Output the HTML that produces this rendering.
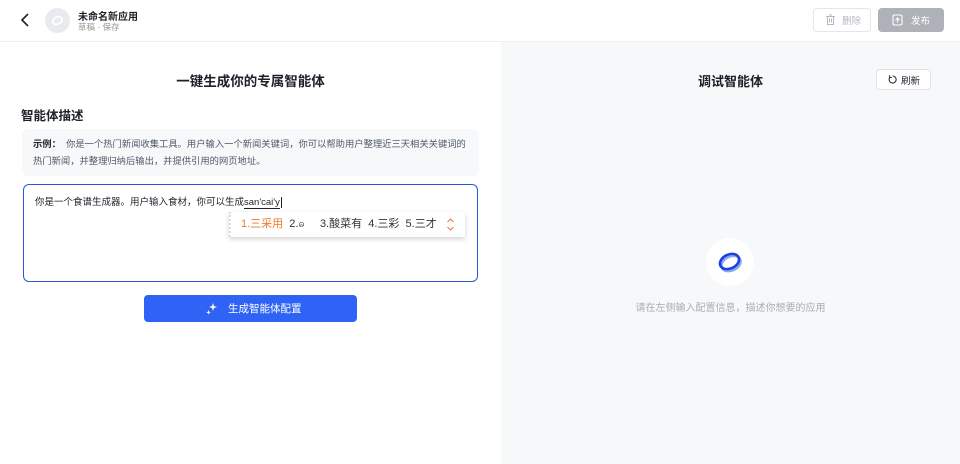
<!DOCTYPE html>
<html><head><meta charset="utf-8"><style>
*{box-sizing:border-box;margin:0;padding:0}
body{width:960px;height:464px;overflow:hidden;font-family:"Liberation Sans","Noto Sans CJK SC",sans-serif;background:#fff;position:relative;color:#1d2129}
.hdr{position:absolute;left:0;top:0;width:960px;height:42px;border-bottom:1px solid #eceef2;background:#fff}
.right{position:absolute;left:501px;top:42px;width:459px;height:422px;background:#f7f8fa}
.abs{position:absolute}
.fc{display:flex;align-items:center}
</style></head><body>
<div class="hdr">
 <svg class="abs" style="left:19px;top:12px" width="14" height="16" viewBox="0 0 14 16"><path d="M9 2 L3 8 L9 14" stroke="#1d2129" stroke-width="1.6" fill="none"/></svg>
 <div class="abs" style="left:45px;top:8px;width:25px;height:25px;border-radius:50%;background:#e8eaee"></div>
 <svg class="abs" style="left:50px;top:14px" width="15" height="13" viewBox="0 0 15 13"><ellipse cx="7.5" cy="6.5" rx="5" ry="3.5" transform="rotate(-25 7.5 6.5)" stroke="#fff" stroke-width="1.6" fill="none"/></svg>
 <div class="abs" style="left:78px;top:8px;font-size:10px;font-weight:bold">未命名新应用</div>
 <div class="abs" style="left:78px;top:21px;font-size:8.5px;color:#999">草稿 · 保存</div>
 <div class="abs fc" style="left:813px;top:8px;width:58px;height:24px;border:1px solid #e5e6eb;border-radius:4px;font-size:9.5px;color:#b5b8bf;padding-left:28px">删除</div>
 <svg class="abs" style="left:825px;top:14px" width="11" height="12" viewBox="0 0 11 12"><path d="M1 2.5h9M4 1h3M2.5 2.5v8h6v-8M4.5 4.5v4M6.5 4.5v4" stroke="#b5b8bf" stroke-width="1" fill="none"/></svg>
 <div class="abs fc" style="left:878px;top:8px;width:66px;height:24px;background:#aeb1b8;border-radius:4px;font-size:9.5px;color:#fff;padding-left:33px">发布</div>
 <svg class="abs" style="left:892px;top:14px" width="11" height="12" viewBox="0 0 11 12"><rect x="1" y="1" width="9" height="10" rx="1.5" stroke="#fff" stroke-width="1.1" fill="none"/><path d="M5.5 8.5V4M3.5 6l2-2 2 2" stroke="#fff" stroke-width="1.1" fill="none"/></svg>
</div>
<div class="abs" style="left:0;top:70px;width:501px;text-align:center;font-size:13.5px;font-weight:bold">一键生成你的专属智能体</div>
<div class="abs" style="left:21px;top:105px;font-size:12.5px;font-weight:bold">智能体描述</div>
<div class="abs" style="left:22px;top:129px;width:457px;height:47px;background:#f7f8fa;border-radius:6px;padding:7px 4px 0 11px;font-size:9.3px;line-height:17px;color:#4e5969"><b style="color:#1d2129;font-weight:bold">示例：</b>&nbsp;&nbsp;你是一个热门新闻收集工具。用户输入一个新闻关键词，你可以帮助用户整理近三天相关关键词的热门新闻，并整理归纳后输出，并提供引用的网页地址。</div>
<div class="abs" style="left:23px;top:184px;width:455px;height:98px;border:1.5px solid #2859d8;border-radius:6px"></div>
<div class="abs" style="left:35px;top:194px;font-size:9.5px;color:#1d2129">你是一个食谱生成器。用户输入食材，你可以生成<span style="border-bottom:1px solid #1d2129">san'cai'y</span><span style="border-left:1px solid #1d2129;margin-left:1px"></span></div>
<div class="abs" style="left:229px;top:212px;width:236px;height:25px;background:#fff;box-shadow:0 2px 5px rgba(0,0,0,.18);border-left:2px dotted #ddd;font-size:11px;line-height:25px;color:#333;padding-left:10px;white-space:nowrap">
 <span style="color:#f0792a">1.三采用</span>&nbsp;&nbsp;2.ဓ&nbsp;&nbsp;&nbsp;&nbsp;&nbsp;3.酸菜有&nbsp;&nbsp;4.三彩&nbsp;&nbsp;5.三才
</div>
<svg class="abs" style="left:446px;top:217px" width="9" height="15" viewBox="0 0 9 15"><path d="M1.5 5l3-3 3 3M1.5 10l3 3 3-3" stroke="#f0792a" stroke-width="1.1" fill="none"/></svg>
<div class="abs fc" style="left:144px;top:295px;width:213px;height:27px;background:#2f63f5;border-radius:4px;color:#fff;font-size:10.5px;padding-left:84px">生成智能体配置</div>
<svg class="abs" style="left:205px;top:302px" width="14" height="14" viewBox="0 0 14 14"><path d="M8 1l1 3 3 1-3 1-1 3-1-3-3-1 3-1zM3.5 8l.6 1.8 1.8.6-1.8.6-.6 1.8-.6-1.8-1.8-.6 1.8-.6z" fill="#fff"/></svg>
<div class="right">
 <div class="abs" style="left:0;top:29px;width:459px;text-align:center;font-size:13px;font-weight:bold">调试智能体</div>
 <div class="abs fc" style="left:375px;top:27px;width:55px;height:21px;background:#fff;border:1px solid #e0e2e7;border-radius:4px;font-size:9.5px;padding-left:24px">刷新</div>
 <svg class="abs" style="left:386px;top:32px" width="11" height="11" viewBox="0 0 11 11"><path d="M3 3.2A3.5 3.5 0 1 0 5.5 2" stroke="#333" stroke-width="1.1" fill="none"/><path d="M2.6 1.2v2.3h2.3" stroke="#333" stroke-width="1.1" fill="none"/></svg>
 <div class="abs" style="left:205px;top:196px;width:48px;height:48px;border-radius:50%;background:#fff"></div>
 <svg class="abs" style="left:213px;top:204px" width="32" height="32" viewBox="0 0 32 32"><ellipse cx="17" cy="17.5" rx="10" ry="7" transform="rotate(-25 17 17.5)" stroke="#8aa6f5" stroke-width="2.6" fill="none"/><ellipse cx="15.5" cy="15.5" rx="10" ry="7" transform="rotate(-25 15.5 15.5)" stroke="#1c3fe0" stroke-width="2.6" fill="none"/></svg>
 <div class="abs" style="left:0;top:257px;width:459px;text-align:center;font-size:10px;color:#a9adb5">请在左侧输入配置信息，描述你想要的应用</div>
</div>
</body></html>
